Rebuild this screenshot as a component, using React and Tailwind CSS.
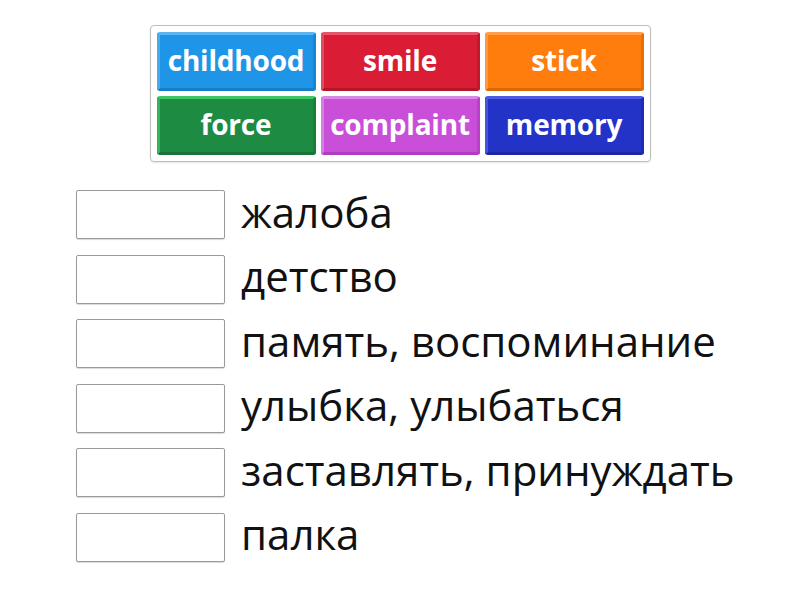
import React from 'react';

const tiles = [
  { label: 'childhood', cls: 'bg-[#1f95e7] border-t-[#5bb5f0] border-l-[#48abee] border-r-[#1886d3] border-b-[#167ec8]' },
  { label: 'smile', cls: 'bg-[#da1c34] border-t-[#e5566a] border-l-[#e24a5d] border-r-[#c11a2e] border-b-[#b3172a]' },
  { label: 'stick', cls: 'bg-[#ff7d0d] border-t-[#ff9e4d] border-l-[#ff9844] border-r-[#e86f08] border-b-[#d96806]' },
  { label: 'force', cls: 'bg-[#1e8b43] border-t-[#3dc865] border-l-[#34b35a] border-r-[#1b7c3c] border-b-[#187336]' },
  { label: 'complaint', cls: 'bg-[#c94fd9] border-t-[#da88e6] border-l-[#d47de2] border-r-[#b842c7] border-b-[#b03cbf]' },
  { label: 'memory', cls: 'bg-[#2433c7] border-t-[#4d5ce0] border-l-[#4655dc] border-r-[#1f2cb0] border-b-[#1c28a3]' },
];

const rows = [
  'жалоба',
  'детство',
  'память, воспоминание',
  'улыбка, улыбаться',
  'заставлять, принуждать',
  'палка',
];

export default function App() {
  return (
    <div className="w-[800px] h-[600px] bg-white font-['Open_Sans',sans-serif] overflow-hidden">
      <div className="flex justify-center pt-[25px]">
        <div className="grid grid-cols-3 gap-[5px] p-[6px] border border-[#bdbdbd] rounded-[4px] shadow-[0_1px_2px_rgba(0,0,0,0.1)]">
          {tiles.map((t) => (
            <div
              key={t.label}
              className={`w-[159px] h-[59px] rounded-[3px] border-[3px] flex items-center justify-center text-white font-bold text-[28px] leading-none tracking-[-0.2px] ${t.cls}`}
            >
              <span className="-mt-[4px]">{t.label}</span>
            </div>
          ))}
        </div>
      </div>
      <div className="flex flex-col gap-[15.5px] pl-[76px] pt-[28px]">
        {rows.map((r) => (
          <div key={r} className="flex items-center h-[49px]">
            <div className="w-[149px] h-[49px] border border-[#9a9a9a] rounded-[2px] shadow-[0_1px_1px_rgba(0,0,0,0.15)] bg-white shrink-0" />
            <span className="ml-[16px] text-[42px] font-normal leading-none text-[#111] -mt-[6px] whitespace-nowrap">{r}</span>
          </div>
        ))}
      </div>
    </div>
  );
}
